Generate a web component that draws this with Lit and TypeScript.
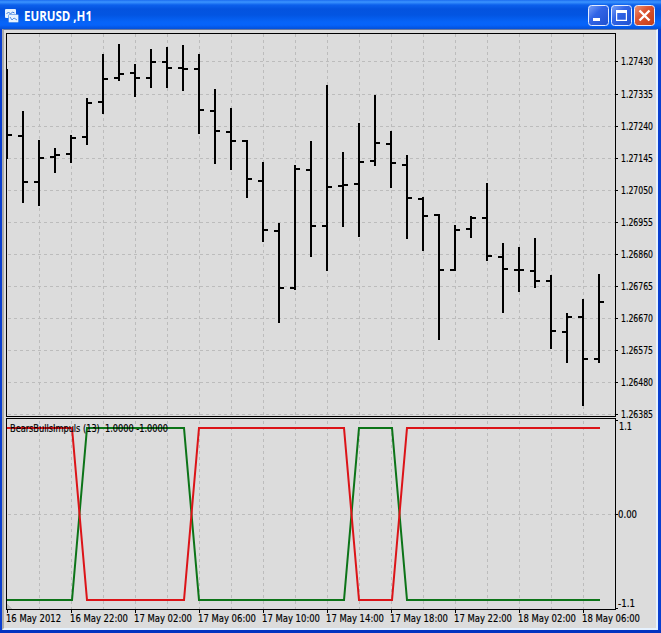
import { LitElement, html, svg, css } from "lit";
import { customElement } from "lit/decorators.js";

// high, low, open, close as vertical chart positions; bars are 16px apart
const BARS: number[][] = [
  [69,159,-9,135],[111,203,136,182],[140,206,182,158],[148,173,157,155],[135,163,154,138],
  [98,145,137,103],[54,114,102,79],[44,81,78,74],[64,97,73,78],[49,88,78,62],
  [47,88,62,68],[45,91,68,69],[54,134,69,110],[89,164,111,131],[108,170,132,141],
  [140,198,141,179],[162,242,181,230],[223,323,231,288],[165,290,288,169],[141,257,170,226],
  [85,271,226,187],[152,227,186,185],[123,237,184,162],[95,166,161,143],[131,188,144,163],
  [155,239,165,198],[197,251,199,216],[214,340,215,270],[225,271,270,230],[216,238,229,218],
  [183,261,218,256],[243,313,257,269],[247,292,270,270],[238,288,271,281],[275,349,281,331],
  [313,363,332,317],[299,406,317,359],[274,363,359,302],
];
const PRICES = ["1.27430","1.27335","1.27240","1.27145","1.27050","1.26955","1.26860","1.26765","1.26670","1.26575","1.26480","1.26385"];
const PRICE_Y = [61, 94, 126, 158, 190, 222, 254, 286, 318, 350, 382, 414];
const TIMES = ["16 May 2012","16 May 22:00","17 May 02:00","17 May 06:00","17 May 10:00","17 May 14:00","17 May 18:00","17 May 22:00","18 May 02:00","18 May 06:00"];
const GRID_X = Array.from({ length: 18 }, (_, i) => 39 + 32 * i);

const paneStyles = css`
  svg { display: block; overflow: visible; }
  text { font: 10px "DejaVu Sans Condensed", "DejaVu Sans", sans-serif; font-stretch: condensed; white-space: pre;
    fill: #000; stroke: #000; stroke-width: .15px; }
  .grid { stroke: #bcbcbc; stroke-dasharray: 3 3; }
  .frame { stroke: #000; fill: none; }
`;

@customElement("price-pane")
export class PricePane extends LitElement {
  static styles = [paneStyles, css`:host { display: block; height: 385px; }`];
  render() {
    return html`<svg width="652" height="385" viewBox="4 32 652 385" shape-rendering="crispEdges">
      ${GRID_X.map((x) => svg`<line class="grid" x1=${x + 0.5} x2=${x + 0.5} y1="34" y2="416"/>`)}
      ${PRICE_Y.map((y) => svg`<line class="grid" x1="8" x2="615" y1=${y + 0.5} y2=${y + 0.5}/>`)}
      ${BARS.map(([h, l, o, c], i) => {
        const x = 6 + 16 * i;
        return svg`<rect x=${x} y=${h} width="2" height=${l - h}/>
          ${i ? svg`<rect x=${x - 4} y=${o - 1} width="4" height="2"/>` : ""}
          <rect x=${x + 2} y=${c - 1} width="4" height="2"/>`;
      })}
      <rect class="frame" x="6.5" y="33.5" width="609" height="383"/>
      ${PRICES.map((p, i) => svg`<rect x="616" y=${PRICE_Y[i]} width="2" height="1"/>
        <text x="621" y=${PRICE_Y[i] + 3.5} textLength="32" lengthAdjust="spacingAndGlyphs">${p}</text>`)}
    </svg>`;
  }
}

@customElement("impulse-pane")
export class ImpulsePane extends LitElement {
  static styles = [paneStyles, css`
    :host { display: block; height: 211px; }
    .bulls, .bears { stroke-width: 2; fill: none; shape-rendering: geometricPrecision; }
    .bulls { stroke: #0c7418; }
    .bears { stroke: #dc1418; }
  `];
  render() {
    return html`<svg width="652" height="211" viewBox="4 417 652 211" shape-rendering="crispEdges">
      ${GRID_X.map((x) => svg`<line class="grid" x1=${x + 0.5} x2=${x + 0.5} y1="421" y2="609"/>`)}
      <line class="grid" x1="8" x2="615" y1="514.5" y2="514.5"/>
      <path fill="#bcbcbc" d="M7 604l5 5H7z"/>
      <polyline class="bulls" points="7,600 72,600 87,428 184,428 199,600 344,600 359,428 392,428 407,600 600,600"/>
      <polyline class="bears" points="7,428 72,428 87,600 184,600 199,428 344,428 359,600 392,600 407,428 600,428"/>
      <rect class="frame" x="6.5" y="418.5" width="609" height="191"/>
      <text x="10" y="432" textLength="158" lengthAdjust="spacingAndGlyphs">BearsBullsImpuls (13)  1.0000 -1.0000</text>
      <rect x="616" y="420" width="2" height="1"/>
      <rect x="616" y="514" width="2" height="1"/>
      <rect x="616" y="608" width="2" height="1"/>
      <text x="619" y="429.5" textLength="13" lengthAdjust="spacingAndGlyphs">1.1</text>
      <text x="618" y="517.5" textLength="19" lengthAdjust="spacingAndGlyphs">0.00</text>
      <text x="618" y="606.5" textLength="17" lengthAdjust="spacingAndGlyphs">-1.1</text>
      ${TIMES.map((t, i) => svg`<rect x=${7 + 64 * i} y="610" width="1" height="3"/>
        <text x=${6 + 64 * i} y="622" textLength=${i ? 58 : 55} lengthAdjust="spacingAndGlyphs">${t}</text>`)}
    </svg>`;
  }
}

@customElement("app-root")
export class AppRoot extends LitElement {
  static styles = css`
    :host { display: flex; flex-direction: column; box-sizing: border-box; width: 661px; height: 633px; background: #0a3fd0; overflow: hidden; }
    .bar { flex: none; height: 29px; display: flex; align-items: center; box-sizing: border-box; padding: 2px 6px 0 5px;
      background: linear-gradient(#1c6cf0 0, #3b94ff 2px, #0c60ec 5px, #0453df 9px, #0355e2 15px, #0664f8 22px, #0663fa 25px, #0350d8 29px); }
    .title { flex: 1; margin-left: 5px; }
    .title svg { display: block; overflow: visible; }
    .title text { font: bold 13.5px "Open Sans", "Noto Sans", sans-serif; fill: #fff; }
    .buttons { display: flex; gap: 2px; }
    .body { flex: 1; margin: 0 3px 0 2px; box-sizing: border-box; padding: 2px 0 0; background: #dcdcdc;
      border: solid; border-width: 1px 2px 2px 2px; border-color: #6b7a9f #e6f2ff #e6f2ff #a9aaa8; }
    .edge { flex: none; height: 4px; background: #0433c0; }
  `;
  render() {
    return html`
      <div class="bar">
        <svg width="14" height="14" viewBox="0 0 14 14">
          <rect x="0" y="0" width="11" height="9" rx="1" fill="#e6f2ff"/>
          <path d="M1.5 5l2-2 2 2 2-2 2 1" stroke="#3779dc" fill="none"/>
          <rect x="3.5" y="5.5" width="10" height="8" rx="1" fill="#e6f2ff" stroke="#3c80e0" stroke-width=".6"/>
          <path d="M5 8l2 3 2-2 3 2" stroke="#5592e8" fill="none"/>
        </svg>
        <div class="title"><svg width="80" height="18"><text x="0" y="14" textLength="68" lengthAdjust="spacingAndGlyphs">EURUSD ,H1</text></svg></div>
        <div class="buttons">${[0, 1, 2].map((k) => html`<svg width="21" height="21" viewBox="0 0 21 21">
          <defs>
            <linearGradient id=${"face" + k} x1="0" y1="0" x2="1" y2="1">
              <stop offset="0" stop-color=${k == 2 ? "#ee9878" : "#7ba2f8"}/>
              <stop offset=".4" stop-color=${k == 2 ? "#dc5432" : "#3265e6"}/>
              <stop offset="1" stop-color=${k == 2 ? "#c23c14" : "#1f50d0"}/>
            </linearGradient>
          </defs>
          <rect x=".5" y=".5" width="20" height="20" rx="3" fill=${`url(#face${k})`} stroke="#e4ecff"/>
          ${k == 0 ? svg`<rect x="5" y="13" width="7" height="3" fill="#fff"/>`
          : k == 1 ? svg`<path d="M5 5h11v11H5zM6.2 8v6.8h8.6V8z" fill="#fff" fill-rule="evenodd"/>`
          : svg`<path d="M5.5 5.5l10 10M15.5 5.5l-10 10" stroke="#fff" stroke-width="2.4"/>`}
        </svg>`)}</div>
      </div>
      <div class="body"><price-pane></price-pane><impulse-pane></impulse-pane></div>
      <div class="edge"></div>`;
  }
}
